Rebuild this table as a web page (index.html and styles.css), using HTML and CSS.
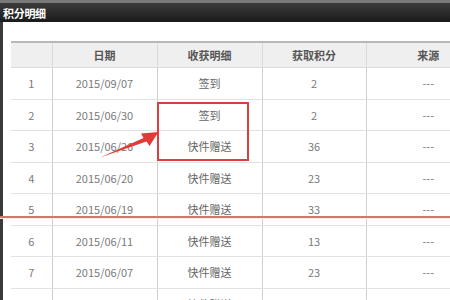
FILE: index.html
```html
<!DOCTYPE html>
<html lang="zh">
<head>
<meta charset="utf-8">
<title>积分明细</title>
<link rel="stylesheet" href="styles.css">
</head>
<body>
<div class="screen">
  <div class="titlebar"><span class="title">积分明细</span></div>
  <div class="panel">
    <table class="grid">
      <colgroup>
        <col class="c-no"><col class="c-date"><col class="c-detail"><col class="c-points"><col class="c-src">
      </colgroup>
      <thead>
        <tr><th></th><th>日期</th><th>收获明细</th><th>获取积分</th><th>来源</th></tr>
      </thead>
      <tbody>
        <tr><td>1</td><td>2015/09/07</td><td class="cjk">签到</td><td>2</td><td>---</td></tr>
        <tr><td>2</td><td>2015/06/30</td><td class="cjk">签到</td><td>2</td><td>---</td></tr>
        <tr><td>3</td><td>2015/06/26</td><td class="cjk">快件赠送</td><td>36</td><td>---</td></tr>
        <tr><td>4</td><td>2015/06/20</td><td class="cjk">快件赠送</td><td>23</td><td>---</td></tr>
        <tr><td>5</td><td>2015/06/19</td><td class="cjk">快件赠送</td><td>33</td><td>---</td></tr>
        <tr><td>6</td><td>2015/06/11</td><td class="cjk">快件赠送</td><td>13</td><td>---</td></tr>
        <tr><td>7</td><td>2015/06/07</td><td class="cjk">快件赠送</td><td>23</td><td>---</td></tr>
        <tr><td>8</td><td>2015/06/03</td><td class="cjk">快件赠送</td><td>23</td><td>---</td></tr>
      </tbody>
    </table>
  </div>
  <div class="highlight-box"></div>
  <div class="red-line"></div>
  <svg class="arrow" width="450" height="300" viewBox="0 0 450 300">
    <path d="M100,157.5 L143.5,138 L141,133.5 L158.5,132 L149.5,146 L146.5,141.5 Z" fill="#e23a35"/>
  </svg>
</div>
</body>
</html>
```
FILE: styles.css
```css
html, body {
  margin: 0;
  padding: 0;
  background: #fff;
}
.screen {
  position: relative;
  width: 450px;
  height: 300px;
  overflow: hidden;
  font-family: "Noto Sans CJK SC", "Liberation Sans", sans-serif;
}
.titlebar {
  height: 19px;
  border-top: 3px solid #7a7a7a;
  background: linear-gradient(#3c3c3c, #1a1a1a);
  padding-left: 3px;
  display: flex;
  align-items: center;
}
.title {
  color: #fff;
  font-size: 11px;
  font-weight: bold;
  letter-spacing: -0.3px;
}
.panel {
  border-left: 3px solid #3a3a3a;
  background: #fff;
  padding: 19px 0 0 8px;
  height: 300px;
}
.grid {
  border-collapse: collapse;
  table-layout: fixed;
  width: 479px;
  font-size: 11px;
  color: #7a7a7a;
}
.c-no { width: 41px; }
.c-date { width: 105px; }
.c-detail { width: 105px; }
.c-points { width: 104px; }
.c-src { width: 124px; }
.grid th {
  height: 24px;
  background: #efefef;
  color: #555;
  font-weight: bold;
  border-top: 2px solid #b8b8b8;
  border-bottom: 1px solid #dcdcdc;
  border-left: 1px solid #dadada;
  padding: 0;
  text-align: center;
}
.grid td {
  height: 30.5px;
  padding: 0;
  text-align: center;
  border-bottom: 1px solid #e2e2e2;
  border-left: 1px solid #cfcfcf;
}
.grid th:first-child, .grid td:first-child {
  border-left: none;
}
.grid td.cjk {
  color: #666;
}
.highlight-box {
  position: absolute;
  left: 157px;
  top: 102px;
  width: 88px;
  height: 55px;
  border: 2px solid #d9403f;
}
.red-line {
  position: absolute;
  left: 0;
  top: 216px;
  width: 450px;
  height: 2px;
  background: #d9736e;
  box-shadow: 0 1px 0 #fbe9e0;
}
.arrow {
  position: absolute;
  left: 0;
  top: 0;
}
```
